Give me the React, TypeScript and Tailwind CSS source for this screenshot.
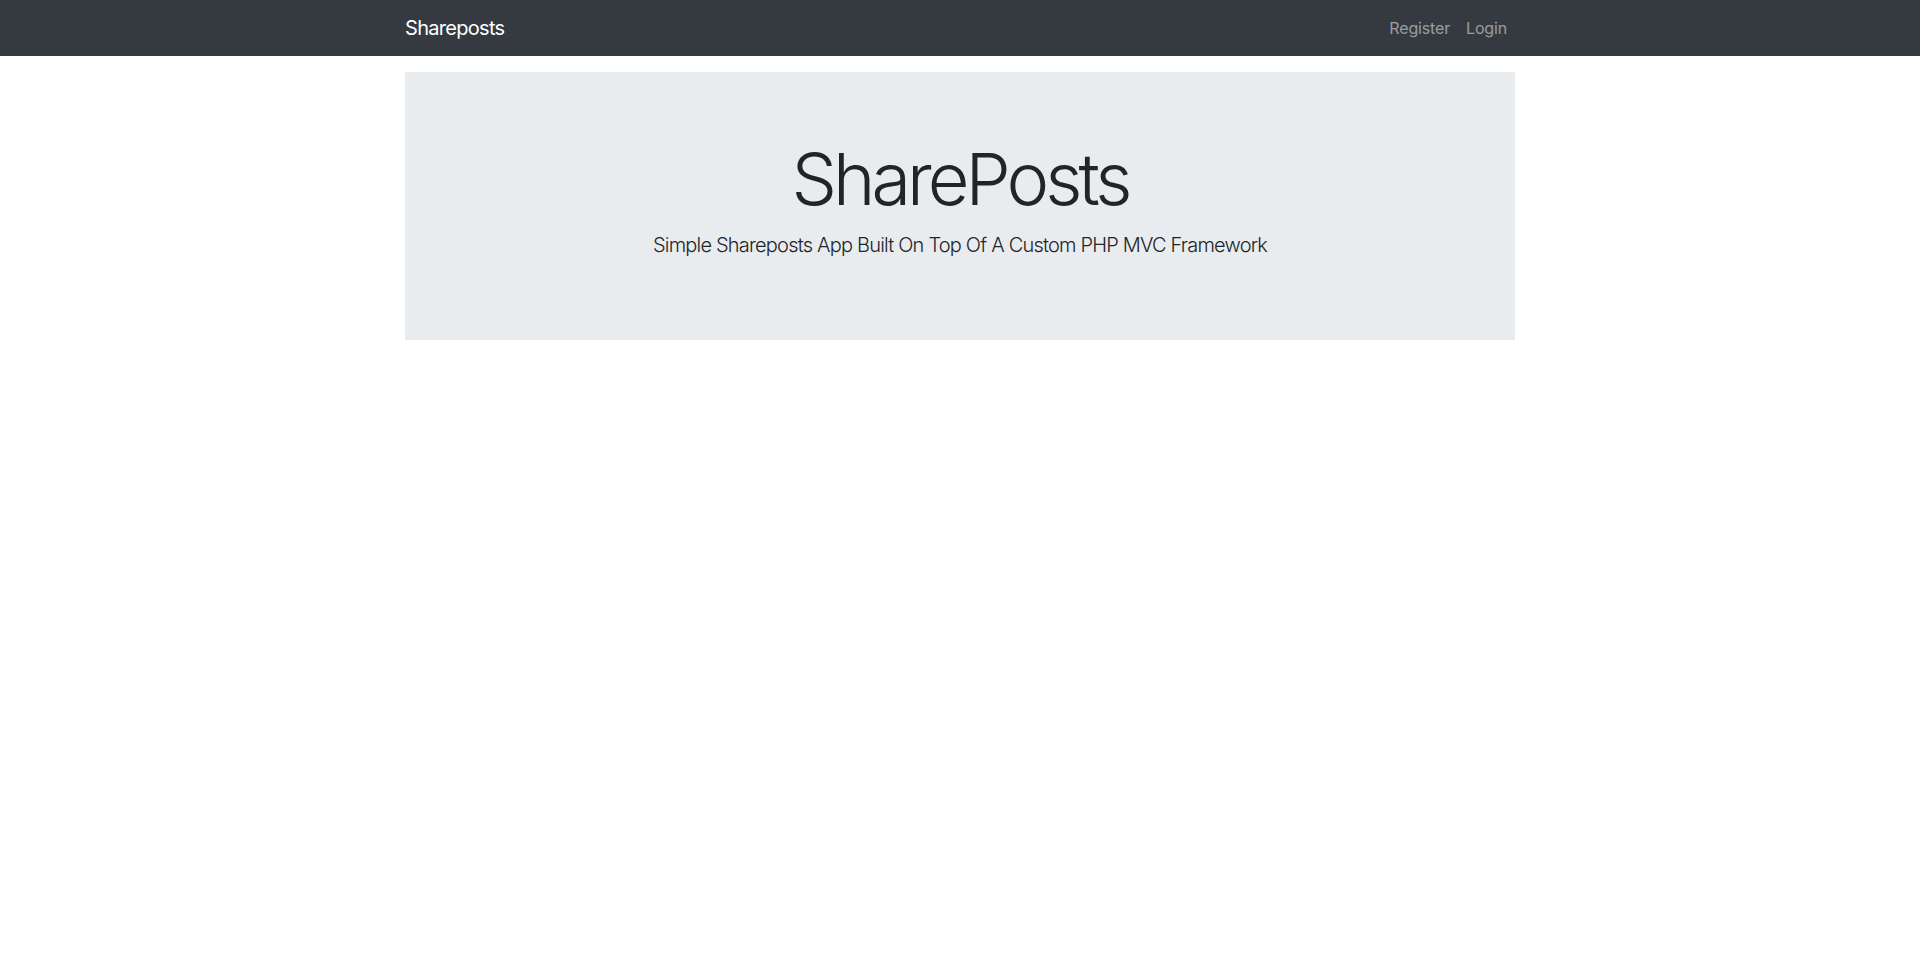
const App = () => {
  return (
    <div className="min-h-screen bg-white text-[#212529] font-['Inter','Liberation_Sans',sans-serif]">
      {/* Navbar */}
      <nav className="bg-[#343a40] py-2">
        <div className="w-[1140px] mx-auto px-[15px] flex items-center justify-between">
          <a className="py-[5px] text-[20px] leading-[30px] tracking-[-0.035em] text-white">Shareposts</a>
          <ul className="flex">
            <li>
              <a className="block px-2 py-2 text-[16px] leading-6 tracking-[-0.01em] text-white/50">Register</a>
            </li>
            <li>
              <a className="block px-2 py-2 text-[16px] leading-6 tracking-[-0.01em] text-white/50">Login</a>
            </li>
          </ul>
        </div>
      </nav>

      {/* Jumbotron */}
      <div className="w-[1140px] mx-auto px-[15px] mt-4">
        <div className="bg-[#e9ecef] py-16 px-8 text-center">
          <h1 className="text-[72px] leading-[1.2] font-light tracking-[-0.055em] mb-2">SharePosts</h1>
          <p className="text-[20px] leading-[30px] font-light tracking-[-0.04em] mb-4">
            Simple Shareposts App Built On Top Of A Custom PHP MVC Framework
          </p>
        </div>
      </div>
    </div>
  );
};

export default App;
